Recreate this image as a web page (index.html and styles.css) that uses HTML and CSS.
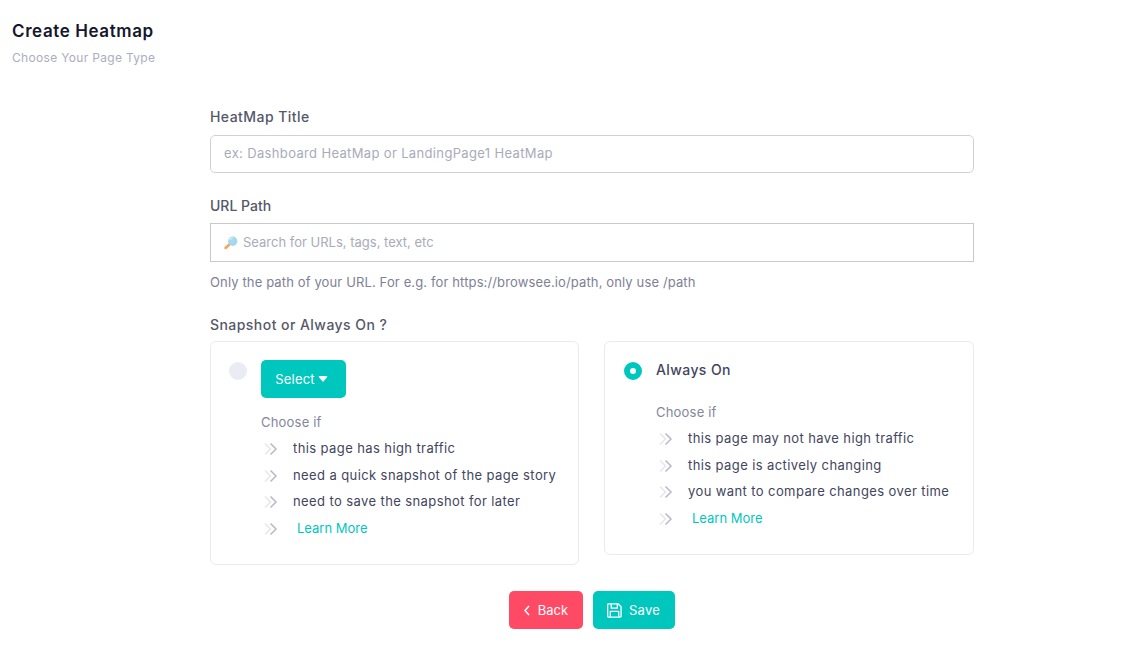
FILE: index.html
```html
<!DOCTYPE html>
<html lang="en">
<head>
<meta charset="utf-8">
<title>Create Heatmap</title>
<link rel="stylesheet" href="styles.css">
</head>
<body>
<header class="page-head">
  <h1 class="page-title">Create Heatmap</h1>
  <p class="page-sub">Choose Your Page Type</p>
</header>
<main class="form">
  <label class="label label-title">HeatMap Title</label>
  <input class="input input-round" type="text" placeholder="ex: Dashboard HeatMap or LandingPage1 HeatMap">
  <label class="label label-url">URL Path</label>
  <div class="search">
    <svg class="search-icon" viewBox="0 0 16 16" width="14" height="14" aria-hidden="true">
      <path d="M6.500 9.500 1.800 13.600" stroke="#f2a45f" stroke-width="3" stroke-linecap="round"/>
      <circle cx="10" cy="6" r="5.300" fill="#a5d8ee"/>
      <path d="M6.800 4.500A3.500 3.500 0 0 1 10 2.300" stroke="#dff3fb" stroke-width="1.200" fill="none"/>
    </svg>
    <input class="input input-square" type="text" placeholder="Search for URLs, tags, text, etc">
  </div>
  <p class="help">Only the path of your URL. For e.g. for https://browsee.io/path, only use /path</p>
  <label class="label label-snap">Snapshot or Always On ?</label>
  <div class="cards">
    <section class="card card-left">
      <span class="radio"></span>
      <div class="card-body">
        <button class="btn btn-select" type="button">Select <span class="caret"></span></button>
        <p class="choose choose-left">Choose if</p>
        <ul class="list">
          <li><svg class="chev" viewBox="0 0 14 14"><use href="#chevs"/></svg><span>this page has high traffic</span></li>
          <li><svg class="chev" viewBox="0 0 14 14"><use href="#chevs"/></svg><span>need a quick snapshot of the page story</span></li>
          <li><svg class="chev" viewBox="0 0 14 14"><use href="#chevs"/></svg><span>need to save the snapshot for later</span></li>
          <li><svg class="chev" viewBox="0 0 14 14"><use href="#chevs"/></svg><a class="more" href="#">Learn More</a></li>
        </ul>
      </div>
    </section>
    <section class="card card-right">
      <span class="radio radio-on"></span>
      <div class="card-body">
        <h2 class="card-title">Always On</h2>
        <p class="choose choose-right">Choose if</p>
        <ul class="list">
          <li><svg class="chev" viewBox="0 0 14 14"><use href="#chevs"/></svg><span>this page may not have high traffic</span></li>
          <li><svg class="chev" viewBox="0 0 14 14"><use href="#chevs"/></svg><span>this page is actively changing</span></li>
          <li><svg class="chev" viewBox="0 0 14 14"><use href="#chevs"/></svg><span>you want to compare changes over time</span></li>
          <li><svg class="chev" viewBox="0 0 14 14"><use href="#chevs"/></svg><a class="more" href="#">Learn More</a></li>
        </ul>
      </div>
    </section>
  </div>
  <div class="actions">
    <button class="btn btn-back" type="button">
      <svg class="back-icon" viewBox="0 0 8 12" width="8" height="12"><path d="M6 2 2 6.500 6 11" fill="none" stroke="#fff" stroke-width="1.500"/></svg>Back</button>
    <button class="btn btn-save" type="button">
      <svg class="save-icon" viewBox="0 0 16 16" width="15" height="15"><path d="M1.500 1h10.500l3 3v10.200a.8.800 0 0 1-.8.800H1.500a.8.800 0 0 1-.8-.8V1.800a.8.800 0 0 1 .8-.8zM4.500 1v4.500h6.500V1M3.500 15V9h9v6" fill="none" stroke="#fff" stroke-width="1.400" stroke-linejoin="round"/></svg>Save</button>
  </div>
</main>
<svg class="defs" width="0" height="0" aria-hidden="true">
  <symbol id="chevs" viewBox="0 0 14 14">
    <path d="M1 1.500 6.500 7 1 12.500" fill="none" stroke="#e6e6ee" stroke-width="1.500"/>
    <path d="M6.500 1.500 12 7 6.500 12.500" fill="none" stroke="#b9b9c9" stroke-width="1.500"/>
  </symbol>
</svg>
</body>
</html>
```
FILE: styles.css
```css
* { box-sizing: border-box; }
html, body { margin: 0; padding: 0; }
body {
  width: 1131px;
  height: 653px;
  overflow: hidden;
  background: #fff;
  font-family: Inter, "Liberation Sans", sans-serif;
  color: #42455e;
}
.page-head { padding: 20px 0 0 12px; height: 93px; }
.page-title { margin: 0; font-size: 17px; line-height: 22px; font-weight: 600; color: #15172b; letter-spacing: .6px; }
.page-sub { margin: 7px 0 0; font-size: 12px; line-height: 18px; color: #abadbe; letter-spacing: .32px; }
.form { width: 764px; margin-left: 210px; }
.label { display: block; font-size: 14px; line-height: 20px; font-weight: 500; color: #555869; }
.label-title { margin-top: 14px; margin-bottom: 8px; letter-spacing: .45px; }
.label-url { margin-top: 23px; margin-bottom: 7px; }
.label-snap { margin-top: 24px; margin-bottom: 6px; letter-spacing: .45px; }
.input {
  display: block;
  width: 100%;
  font: inherit;
  font-size: 13px;
  color: #42455e;
  outline: none;
  background: #fff;
}
.input::placeholder { color: #a9abb9; opacity: 1; }
.input-round { height: 38px; padding: 0 13px 2px; border: 1px solid #cfd1d8; border-radius: 5px; letter-spacing: .35px; }
.search { position: relative; }
.search-icon { position: absolute; left: 14px; top: 13px; }
.input-square { height: 39px; padding: 0 13px 2px 32px; border: 1px solid #c9c9c9; }
.help { margin: 11px 0 0; font-size: 13px; line-height: 18px; color: #7e8196; letter-spacing: .13px; }
.cards { display: flex; align-items: flex-start; gap: 25px; }
.card { display: flex; border: 1px solid #eaeaf1; border-radius: 6px; background: #fff; }
.card-left { width: 369px; height: 224px; padding: 18px 0 0 18px; }
.card-right { width: 370px; height: 214px; padding: 18px 0 0 19px; }
.radio { flex: none; width: 18px; height: 18px; margin-top: 2px; border-radius: 50%; background: #ebecf3; }
.radio-on { background: #fff; border: 6px solid #00c7be; }
.card-body { margin-left: 14px; }
.btn {
  display: inline-flex;
  align-items: center;
  justify-content: center;
  height: 38px;
  border: 0;
  border-radius: 5px;
  font: inherit;
  font-size: 13px;
  color: #fff;
}
.btn-select { width: 85px; gap: 3px; padding: 0 4px 0 0; background: #00c7be; letter-spacing: .2px; }
.caret { width: 0; height: 0; border-left: 5.500px solid transparent; border-right: 5.500px solid transparent; border-top: 6px solid #fff; border-radius: 2px; }
.card-title { margin: -1px 0 0; font-size: 14px; line-height: 22px; font-weight: 500; color: #42455e; letter-spacing: .4px; }
.choose { margin: 0; font-size: 13px; line-height: 20px; color: #83869c; letter-spacing: .2px; }
.choose-left { margin-top: 14px; }
.choose-right { margin-top: 21px; }
.list { list-style: none; margin: 3px 0 0; padding: 0; }
.list li { display: flex; align-items: center; height: 26.500px; font-size: 13px; color: #42455e; letter-spacing: .4px; }
.chev { flex: none; width: 14px; height: 14px; margin: 2px 15px 0 3px; }
.more { margin-left: 4px; color: #00c7be; text-decoration: none; letter-spacing: 0; }
.actions { display: flex; justify-content: center; gap: 10px; margin-top: 26px; padding-right: 1px; }
.btn-back { width: 74px; gap: 7px; background: #ff4a65; }
.btn-save { width: 82px; gap: 7px; background: #00c7be; letter-spacing: .2px; }
.defs { position: absolute; }
```
